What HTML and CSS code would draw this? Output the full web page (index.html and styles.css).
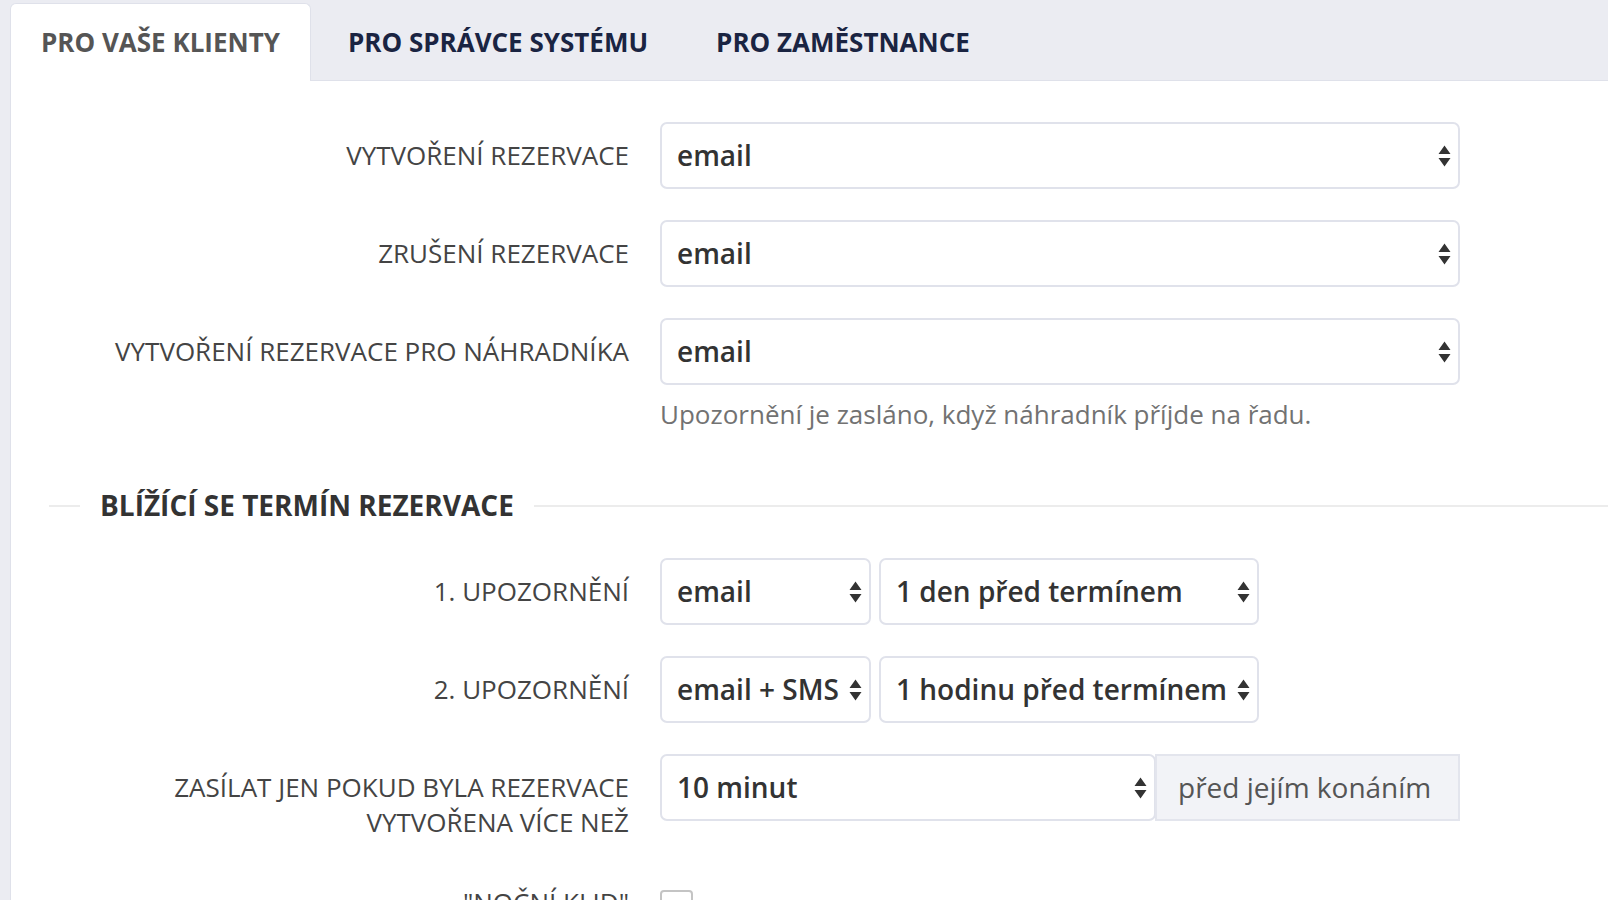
FILE: index.html
```html
<!DOCTYPE html>
<html lang="cs">
<head>
<meta charset="utf-8">
<title>Notifikace</title>
<link rel="stylesheet" href="styles.css">
</head>
<body>
<div class="page">
  <nav class="tabs">
    <div class="tab active">PRO VAŠE KLIENTY</div>
    <div class="tab">PRO SPRÁVCE SYSTÉMU</div>
    <div class="tab">PRO ZAMĚSTNANCE</div>
  </nav>
  <section class="panel">
    <div class="row">
      <div class="label">VYTVOŘENÍ REZERVACE</div>
      <div class="controls">
        <div class="select full"><span>email</span><svg class="arrows" width="13" height="24" viewBox="0 0 13 24"><path d="M6.5 1.5 L12.5 10 H0.5 Z M6.5 22.5 L12.5 14 H0.5 Z" fill="#333"/></svg></div>
      </div>
    </div>
    <div class="row">
      <div class="label">ZRUŠENÍ REZERVACE</div>
      <div class="controls">
        <div class="select full"><span>email</span><svg class="arrows" width="13" height="24" viewBox="0 0 13 24"><path d="M6.5 1.5 L12.5 10 H0.5 Z M6.5 22.5 L12.5 14 H0.5 Z" fill="#333"/></svg></div>
      </div>
    </div>
    <div class="row">
      <div class="label">VYTVOŘENÍ REZERVACE PRO NÁHRADNÍKA</div>
      <div class="controls">
        <div class="select full"><span>email</span><svg class="arrows" width="13" height="24" viewBox="0 0 13 24"><path d="M6.5 1.5 L12.5 10 H0.5 Z M6.5 22.5 L12.5 14 H0.5 Z" fill="#333"/></svg></div>
        <p class="help">Upozornění je zasláno, když náhradník příjde na řadu.</p>
      </div>
    </div>

    <div class="legend"><span class="line short"></span><h2>BLÍŽÍCÍ SE TERMÍN REZERVACE</h2><span class="line"></span></div>

    <div class="row">
      <div class="label">1. UPOZORNĚNÍ</div>
      <div class="controls inline">
        <div class="select s1"><span>email</span><svg class="arrows" width="13" height="24" viewBox="0 0 13 24"><path d="M6.5 1.5 L12.5 10 H0.5 Z M6.5 22.5 L12.5 14 H0.5 Z" fill="#333"/></svg></div>
        <div class="select s2"><span>1 den před termínem</span><svg class="arrows" width="13" height="24" viewBox="0 0 13 24"><path d="M6.5 1.5 L12.5 10 H0.5 Z M6.5 22.5 L12.5 14 H0.5 Z" fill="#333"/></svg></div>
      </div>
    </div>
    <div class="row">
      <div class="label">2. UPOZORNĚNÍ</div>
      <div class="controls inline">
        <div class="select s1"><span>email + SMS</span><svg class="arrows" width="13" height="24" viewBox="0 0 13 24"><path d="M6.5 1.5 L12.5 10 H0.5 Z M6.5 22.5 L12.5 14 H0.5 Z" fill="#333"/></svg></div>
        <div class="select s2"><span>1 hodinu před termínem</span><svg class="arrows" width="13" height="24" viewBox="0 0 13 24"><path d="M6.5 1.5 L12.5 10 H0.5 Z M6.5 22.5 L12.5 14 H0.5 Z" fill="#333"/></svg></div>
      </div>
    </div>
    <div class="row">
      <div class="label">ZASÍLAT JEN POKUD BYLA REZERVACE<br>VYTVOŘENA VÍCE NEŽ</div>
      <div class="controls group">
        <div class="select grow"><span>10 minut</span><svg class="arrows" width="13" height="24" viewBox="0 0 13 24"><path d="M6.5 1.5 L12.5 10 H0.5 Z M6.5 22.5 L12.5 14 H0.5 Z" fill="#333"/></svg></div>
        <div class="addon">před jejím konáním</div>
      </div>
    </div>
    <div class="row check-row">
      <div class="label">"NOČNÍ KLID"</div>
      <div class="controls">
        <span class="checkbox"></span>
      </div>
    </div>
  </section>
</div>
</body>
</html>
```
FILE: styles.css
```css
* { box-sizing: border-box; }
html, body { margin: 0; padding: 0; }
body {
  background: #ebecf2;
  font-family: "Open Sans", "Noto Sans", sans-serif;
  color: #444;
  overflow: hidden;
  height: 900px;
}
.page {
  padding: 3px 0 0 10px;
}
.tabs {
  display: flex;
  gap: 6px;
  position: relative;
  z-index: 1;
  margin-bottom: -1px;
}
.tab {
  height: 78px;
  padding: 0 30px 2px 30px;
  display: flex;
  align-items: center;
  font-size: 26px;
  font-weight: 700;
  color: #1a2442;
  border: 1px solid transparent;
  border-bottom: 0;
  border-radius: 6px 6px 0 0;
}
.tab.active {
  background: #fff;
  color: #555;
  border-color: #dfe1ea;
}
.panel {
  background: #fff;
  border-top: 1px solid #dfe1ea;
  border-left: 1px solid #dfe1ea;
  padding-top: 41px;
  min-height: 900px;
}
.row {
  display: grid;
  grid-template-columns: 618px 800px;
  column-gap: 31px;
  margin-bottom: 31px;
}
.label {
  text-align: right;
  font-size: 26px;
  line-height: 35px;
  padding-top: 16px;
  color: #444;
}
.controls.inline {
  display: flex;
  gap: 8px;
}
.controls.group {
  display: flex;
}
.select {
  height: 67px;
  border: 2px solid #e0e2eb;
  border-radius: 7px;
  background: #fff;
  display: flex;
  align-items: center;
  justify-content: space-between;
  padding: 0 7px 0 15px;
  font-size: 28px;
  font-weight: 600;
  color: #333;
  white-space: nowrap;
}
.select span { padding-bottom: 2px; }
.arrows { flex: none; }
.select.full { width: 800px; }
.select.s1 { width: 211px; }
.select.s2 { width: 380px; }
.select.grow { width: 496px; }
.addon {
  width: 305px;
  height: 67px;
  margin-left: -1px;
  background: #f2f3f7;
  border: 2px solid #e3e5ed;
  display: flex;
  align-items: center;
  padding: 0 0 2px 21px;
  font-size: 28px;
  color: #555;
  white-space: nowrap;
}
.help {
  margin: 14px 0 0;
  font-size: 26px;
  line-height: 30px;
  color: #727272;
  white-space: nowrap;
}
.legend {
  display: flex;
  align-items: center;
  gap: 20px;
  margin: 59px 0 35px 38px;
}
.legend .line {
  flex: 1;
  height: 2px;
  background: #ececec;
}
.legend .line.short {
  flex: none;
  width: 31px;
}
.legend h2 {
  margin: 0;
  font-size: 28px;
  line-height: 35px;
  font-weight: 700;
  color: #333;
  white-space: nowrap;
}
.check-row .label { padding-top: 14px; }
.checkbox {
  display: block;
  margin-top: 19px;
  width: 33px;
  height: 33px;
  border: 2px solid #c4c4c4;
  border-radius: 4px;
  background: #fff;
}
```
